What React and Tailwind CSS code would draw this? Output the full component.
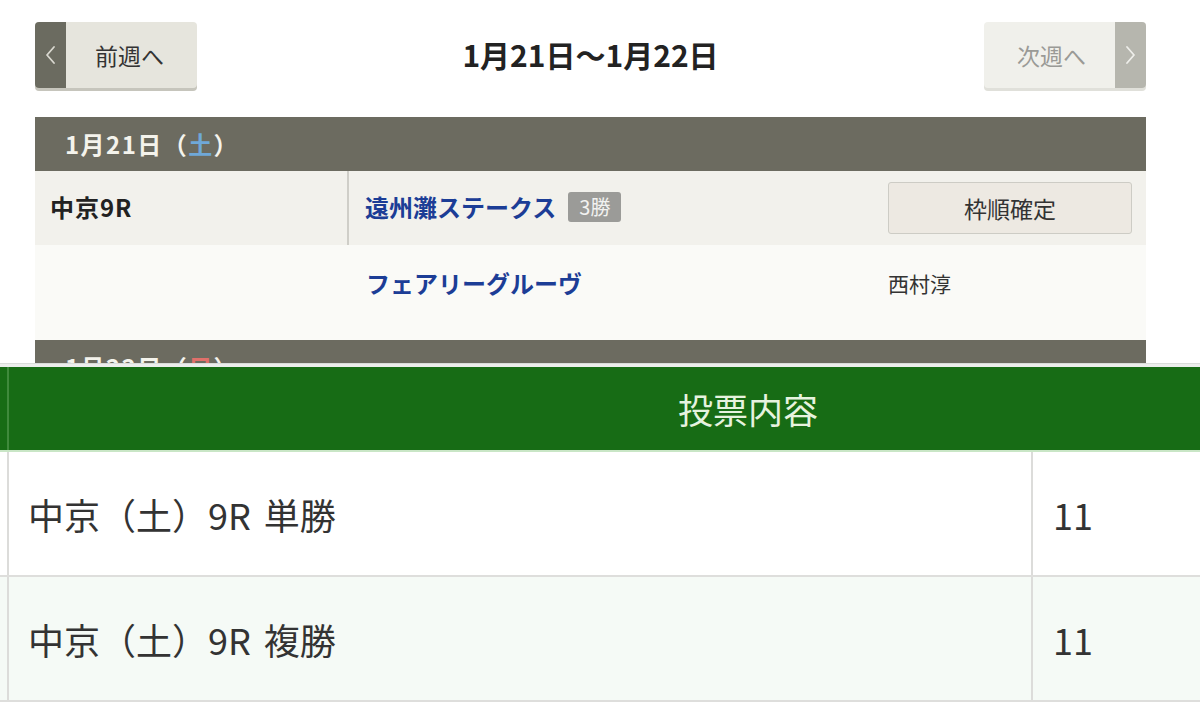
import React from 'react';

const font = { fontFamily: '"Noto Sans CJK JP", "Noto Sans", sans-serif' };

const Chevron = ({ dir = 'left', color }) => (
  <svg width="11" height="20" viewBox="0 0 11 20" fill="none">
    <polyline
      points={dir === 'left' ? '9,2 2,10 9,18' : '2,2 9,10 2,18'}
      stroke={color}
      strokeWidth="1.8"
      strokeLinecap="round"
      strokeLinejoin="round"
    />
  </svg>
);

const DayHeader = ({ date, day, dayColor }) => (
  <div className="h-[54px] bg-[#6c6b60] flex items-center pl-[30px] text-[24px] tracking-[0.06em] font-bold text-[#f4f3ec] leading-none">
    <span>{date}</span>
    <span>（</span>
    <span className={dayColor}>{day}</span>
    <span>）</span>
  </div>
);

const TopPage = () => (
  <div className="h-[363px] overflow-hidden bg-white">
    <div className="ml-[35px] w-[1111px] pt-[22px]">
      <div className="flex items-start justify-between">
        <button className="flex h-[66px] w-[162px] rounded-[4px] overflow-hidden bg-[#e6e5dd] shadow-[0_3px_0_#c6c5bc]">
          <div className="w-[31px] h-full bg-[#6b6b60] flex items-center justify-center">
            <Chevron dir="left" color="#d9d8d0" />
          </div>
          <div className="flex-1 flex items-center justify-center text-[23px] text-[#333] pr-[4px]">前週へ</div>
        </button>
        <h1 className="pt-[17px] text-[30px] font-bold text-[#222] leading-none">1月21日〜1月22日</h1>
        <button className="flex h-[66px] w-[162px] rounded-[4px] overflow-hidden bg-[#f0f0eb] shadow-[0_3px_0_#e0e0da]">
          <div className="flex-1 flex items-center justify-center text-[23px] text-[#9a9a96] pl-[4px]">次週へ</div>
          <div className="w-[31px] h-full bg-[#b6b6ae] flex items-center justify-center">
            <Chevron dir="right" color="#eeeeea" />
          </div>
        </button>
      </div>

      <div className="mt-[29px]">
        <DayHeader date="1月21日" day="土" dayColor="text-[#6fa8d8]" />
        <div className="flex h-[74px] bg-[#f2f1ec]">
          <div className="w-[314px] border-r-2 border-[#cfcec8] pl-[15px] pt-[24px] text-[24px] tracking-[0.04em] font-bold text-[#222] leading-none">
            中京9R
          </div>
          <div className="flex-1 flex items-start pl-[16px] pt-[24px]">
            <span className="text-[24px] font-bold text-[#1c3d96] leading-none">遠州灘ステークス</span>
            <span className="ml-[12px] -mt-[3px] h-[30px] px-[11px] rounded-[3px] bg-[#9b9b98] text-[20px] text-[#f2f2f0] flex items-center leading-none">3勝</span>
          </div>
          <div className="w-[258px] pt-[11px]">
            <div className="w-[244px] h-[52px] rounded-[3px] border border-[#cdccc5] bg-[#ede9e2] flex items-center justify-center text-[23px] text-[#333]">
              枠順確定
            </div>
          </div>
        </div>
        <div className="flex h-[95px] bg-[#fafaf7]">
          <div className="w-[316px]" />
          <div className="flex-1 pl-[15px] pt-[26px] text-[24px] font-bold text-[#1c3d96] leading-none">フェアリーグルーヴ</div>
          <div className="w-[258px] pt-[28px] text-[21px] text-[#333] leading-none">西村淳</div>
        </div>
        <DayHeader date="1月22日" day="日" dayColor="text-[#e0706a]" />
      </div>
    </div>
  </div>
);

const BetRow = ({ label, kind, value, bg }) => (
  <div className={`pl-[7px] ${bg} border-b-2 border-[#dededc]`}>
    <div className="flex h-[123px] border-l-2 border-[#dcdcda]">
      <div className="w-[1024px] border-r-2 border-[#dcdcda] flex items-center pl-[19px] text-[36px] text-[#333] leading-none">
        <span>{label}</span>
        <span className="ml-[13px]">{kind}</span>
      </div>
      <div className="flex-1 flex items-center pl-[20px] text-[36px] text-[#333] leading-none">{value}</div>
    </div>
  </div>
);

const BetTable = () => (
  <div className="bg-white">
    <div className="h-[4px] bg-[#eceeec] border-t border-[#dadcda]" />
    <div className="bg-[#176c15] pl-[7px] border-b-2 border-[#c9e6c6]">
      <div className="h-[83px] border-l-2 border-[#3f8a3c] flex items-center pl-[669px] text-[35px] text-[#e6f3df] leading-none">
        投票内容
      </div>
    </div>
    <BetRow label="中京（土）9R" kind="単勝" value="11" bg="bg-white" />
    <BetRow label="中京（土）9R" kind="複勝" value="11" bg="bg-[#f5faf6]" />
  </div>
);

export default function App() {
  return (
    <div className="w-[1200px] h-[724px] bg-white overflow-hidden" style={font}>
      <TopPage />
      <BetTable />
    </div>
  );
}
